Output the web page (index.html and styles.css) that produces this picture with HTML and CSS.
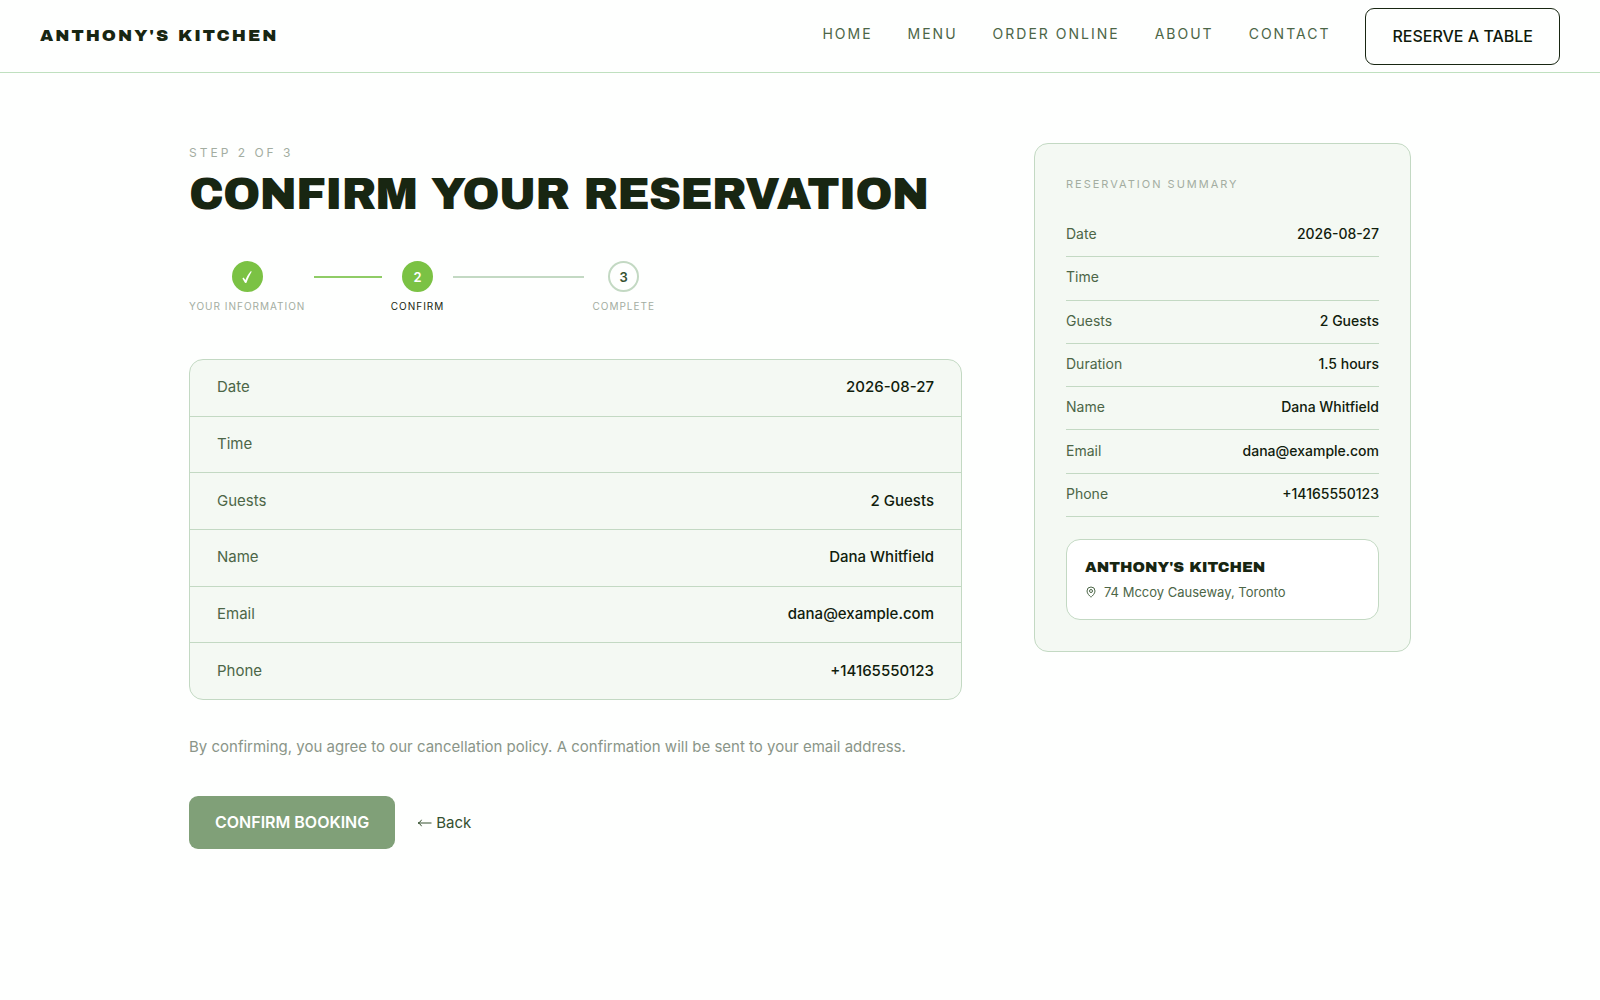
FILE: index.html
```html
<!DOCTYPE html>
<html lang="en">
<head>
<meta charset="utf-8">
<meta name="viewport" content="width=device-width, initial-scale=1">
<title>Confirm Your Reservation – Anthony's Kitchen</title>
<link rel="stylesheet" href="styles.css">
</head>
<body>
<header class="site-header">
  <a class="brand" href="#">Anthony's Kitchen</a>
  <nav class="nav" aria-label="Main">
    <a class="nav-link" href="#">Home</a>
    <a class="nav-link" href="#">Menu</a>
    <a class="nav-link" href="#">Order Online</a>
    <a class="nav-link" href="#">About</a>
    <a class="nav-link" href="#">Contact</a>
    <button class="reserve" type="button">Reserve a Table</button>
  </nav>
</header>
<main class="page">
  <section class="booking">
    <p class="eyebrow">Step 2 of 3</p>
    <h1 class="title">Confirm Your Reservation</h1>
    <ol class="steps">
      <li class="step">
        <div class="step-body"><span class="dot dot-on"><svg class="tick" viewBox="0 0 12 14" aria-hidden="true"><path d="M1.4 8.6 2.5 7.6 4.5 9.9C5.8 6.7 7.5 3.8 9.7 1.2L10.8 1.5C8.6 5 7 8.700 5.500 12.800L4.100 12.900Z"/></svg></span><span class="step-label">Your Information</span></div>
        <span class="bar bar-on"></span>
      </li>
      <li class="step" aria-current="step">
        <div class="step-body"><span class="dot dot-on">2</span><span class="step-label step-label-on">Confirm</span></div>
        <span class="bar"></span>
      </li>
      <li class="step step-last">
        <div class="step-body"><span class="dot">3</span><span class="step-label">Complete</span></div>
      </li>
    </ol>
    <dl class="details">
      <div class="detail"><dt>Date</dt><dd>2026-08-27</dd></div>
      <div class="detail"><dt>Time</dt><dd></dd></div>
      <div class="detail"><dt>Guests</dt><dd>2 Guests</dd></div>
      <div class="detail"><dt>Name</dt><dd>Dana Whitfield</dd></div>
      <div class="detail"><dt>Email</dt><dd>dana@example.com</dd></div>
      <div class="detail"><dt>Phone</dt><dd>+14165550123</dd></div>
    </dl>
    <p class="note">By confirming, you agree to our cancellation policy. A confirmation will be sent to your email address.</p>
    <div class="actions">
      <button class="confirm" type="button">Confirm Booking</button>
      <button class="back" type="button"><svg class="arrow" viewBox="0 0 15 10" aria-hidden="true"><path d="M14.500 5H1.500M4.500 1.800C3.700 3.500 2.700 4.500 1 5 2.700 5.500 3.700 6.500 4.500 8.200"/></svg>Back</button>
    </div>
  </section>
  <aside class="summary">
    <h2 class="summary-title">Reservation Summary</h2>
    <dl class="summary-list">
      <div class="summary-row"><dt>Date</dt><dd>2026-08-27</dd></div>
      <div class="summary-row"><dt>Time</dt><dd></dd></div>
      <div class="summary-row"><dt>Guests</dt><dd>2 Guests</dd></div>
      <div class="summary-row"><dt>Duration</dt><dd>1.5 hours</dd></div>
      <div class="summary-row"><dt>Name</dt><dd>Dana Whitfield</dd></div>
      <div class="summary-row"><dt>Email</dt><dd>dana@example.com</dd></div>
      <div class="summary-row"><dt>Phone</dt><dd>+14165550123</dd></div>
    </dl>
    <div class="venue">
      <p class="venue-name">Anthony's Kitchen</p>
      <p class="venue-address"><svg class="pin" viewBox="0 0 24 24" aria-hidden="true"><path d="M20 10c0 5-5.500 10.200-7.400 11.800a1 1 0 0 1-1.200 0C9.500 20.200 4 15 4 10a8 8 0 0 1 16 0"/><circle cx="12" cy="10" r="3"/></svg>74 Mccoy Causeway, Toronto</p>
    </div>
  </aside>
</main>
</body>
</html>
```
FILE: styles.css
```css
:root {
  --ink: #182612;
  --muted: #4c6647;
  --faint: #a3ada1;
  --line: #c3d9c3;
  --tint: #f4f9f3;
  --green: #7bc244;
}

* {
  box-sizing: border-box;
}

body {
  margin: 0;
  background: #fefffe;
  color: var(--ink);
  font-family: Inter, "Liberation Sans", sans-serif;
  font-size: 15px;
  line-height: 24px;
}

h1, h2, p, dl, dd, ol {
  margin: 0;
  padding: 0;
}

button {
  font-family: inherit;
  cursor: pointer;
}

.site-header {
  display: flex;
  align-items: center;
  justify-content: space-between;
  min-height: 73px;
  padding: 0 40px;
  border-bottom: 1px solid #bfe0bf;
}

.brand {
  color: var(--ink);
  font-family: "Archivo Black", Inter, sans-serif;
  font-size: 17px;
  font-weight: 400;
  letter-spacing: 2px;
  text-decoration: none;
  text-transform: uppercase;
}

.nav {
  display: flex;
  align-items: center;
  gap: 35px;
}

.nav-link {
  padding-bottom: 4px;
  color: var(--muted);
  font-size: 14px;
  letter-spacing: 2px;
  text-decoration: none;
  text-transform: uppercase;
}

.reserve {
  padding: 15px 26px;
  border: 1px solid var(--ink);
  border-radius: 9px;
  background: transparent;
  color: #0f1a0c;
  font-size: 16px;
  font-weight: 500;
  line-height: 25px;
  text-transform: uppercase;
}

.page {
  display: grid;
  grid-template-columns: minmax(0, 1fr) 377px;
  align-items: start;
  gap: 72px;
  max-width: 1222px;
  margin: 0 auto;
  padding: 70px 0;
}

.eyebrow {
  color: var(--faint);
  font-size: 12px;
  line-height: 20px;
  letter-spacing: 3px;
  text-transform: uppercase;
}

.title {
  margin-top: 7px;
  font-family: "Archivo Black", Inter, sans-serif;
  font-size: 45px;
  font-weight: 400;
  line-height: 48px;
  letter-spacing: -1px;
  text-transform: uppercase;
  white-space: nowrap;
}

.steps {
  display: flex;
  max-width: 466px;
  margin-top: 43px;
  list-style: none;
}

.step {
  display: flex;
  flex: 1;
}

.step-last {
  flex: none;
}

.step-body {
  display: flex;
  flex-direction: column;
  align-items: center;
  gap: 6px;
}

.dot {
  display: flex;
  align-items: center;
  justify-content: center;
  width: 31px;
  height: 31px;
  border: 2px solid var(--line);
  border-radius: 50%;
  color: #35502f;
  font-size: 13px;
  font-weight: 600;
}

.dot-on {
  border-color: var(--green);
  background: var(--green);
  color: #fff;
}

.tick {
  width: 12px;
  height: 14px;
  fill: #fff;
}

.step-label {
  color: var(--faint);
  font-size: 10px;
  line-height: 16px;
  letter-spacing: 1px;
  text-transform: uppercase;
  white-space: nowrap;
}

.step-label-on {
  color: var(--ink);
}

.bar {
  flex: 1;
  height: 2px;
  margin: 15px 9px 0;
  background: var(--line);
}

.bar-on {
  background: #8fcc66;
}

.details {
  display: flex;
  flex-direction: column;
  min-height: 341px;
  margin-top: 45px;
  border: 1px solid var(--line);
  border-radius: 14px;
  background: var(--tint);
}

.detail {
  display: flex;
  flex: 1;
  align-items: center;
  justify-content: space-between;
  padding: 0 27px 1px;
  border-top: 1px solid var(--line);
}

.detail:first-child {
  border-top: 0;
}

dt {
  color: var(--muted);
}

dd {
  color: #10200c;
  font-weight: 500;
}

.note {
  margin-top: 35px;
  color: #8a9588;
}

.actions {
  display: flex;
  align-items: center;
  gap: 22px;
  margin-top: 37px;
}

.confirm {
  padding: 14px 26px;
  border: 0;
  border-radius: 9px;
  background: #80a078;
  color: #fff;
  font-size: 16px;
  font-weight: 600;
  line-height: 25px;
  text-transform: uppercase;
}

.back {
  display: flex;
  align-items: center;
  gap: 4px;
  padding: 0;
  border: 0;
  background: none;
  color: #35502f;
  font-size: 15px;
  line-height: 24px;
}

.arrow {
  width: 15px;
  height: 10px;
  fill: none;
  stroke: currentColor;
}

.summary {
  padding: 31px;
  border: 1px solid var(--line);
  border-radius: 14px;
  background: var(--tint);
}

.summary-title {
  color: var(--faint);
  font-size: 11px;
  font-weight: 400;
  line-height: 18px;
  letter-spacing: 2px;
  text-transform: uppercase;
}

.summary-list {
  display: flex;
  flex-direction: column;
  min-height: 303px;
  margin-top: 21px;
  font-size: 14px;
}

.summary-row {
  display: flex;
  flex: 1;
  align-items: center;
  justify-content: space-between;
  padding-bottom: 2px;
  border-bottom: 1px solid var(--line);
}

.venue {
  margin-top: 22px;
  padding: 15px 18px;
  border: 1px solid var(--line);
  border-radius: 14px;
  background: #fff;
}

.venue-name {
  font-family: "Archivo Black", Inter, sans-serif;
  font-size: 15px;
  font-weight: 400;
  text-transform: uppercase;
}

.venue-address {
  display: flex;
  align-items: center;
  gap: 7px;
  margin-top: 1px;
  color: var(--muted);
  font-size: 13px;
}

.pin {
  width: 12px;
  height: 12px;
  fill: none;
  stroke: currentColor;
  stroke-width: 2;
}
```
